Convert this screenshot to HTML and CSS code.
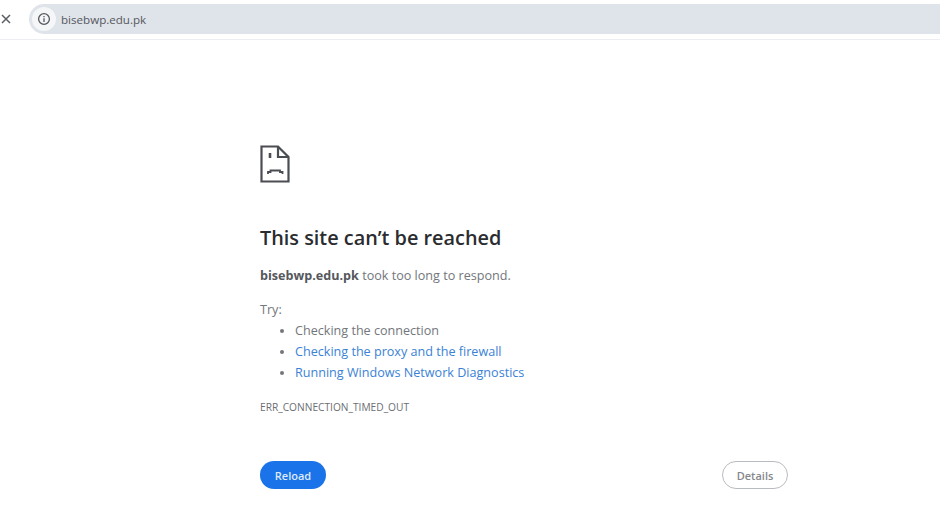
FILE: index.html
```html
<!DOCTYPE html>
<html>
<head>
<meta charset="UTF-8">
<title>bisebwp.edu.pk</title>
<link rel="stylesheet" href="styles.css">
</head>
<body>
<div class="toolbar">
  <svg class="close" width="12" height="12" viewBox="0 0 12 12"><path d="M2 2 L10 10 M10 2 L2 10" stroke="#5a5d62" stroke-width="1.5" fill="none"/></svg>
  <div class="address">
    <span class="info">
      <svg width="14" height="14" viewBox="0 0 14 14"><circle cx="7" cy="7" r="5.4" stroke="#55585d" stroke-width="1.3" fill="none"/><path d="M7 6.3 V10 M7 4 V5.3" stroke="#55585d" stroke-width="1.3" fill="none"/></svg>
    </span>
    <span class="url">bisebwp.edu.pk</span>
  </div>
</div>
<div class="main">
  <svg class="sad" width="30" height="38" viewBox="0 0 30 38">
    <path d="M1.5 1.5 H18 L28.5 12 V36.5 H1.5 Z" stroke="#4a4d51" stroke-width="2.2" fill="none"/>
    <path d="M18 1.5 V12 H28.5" stroke="#4a4d51" stroke-width="2.2" fill="none"/>
    <path d="M10 8 V13" stroke="#4a4d51" stroke-width="2.6" fill="none"/>
    <path d="M8 29 V27 H10.5 V25.5 H20 V27 H22.5 V29" stroke="#4a4d51" stroke-width="1.8" fill="none"/>
  </svg>
  <h1>This site can’t be reached</h1>
  <p class="summary"><b>bisebwp.edu.pk</b> took too long to respond.</p>
  <p class="try">Try:</p>
  <ul>
    <li>Checking the connection</li>
    <li><a href="#">Checking the proxy and the firewall</a></li>
    <li><a href="#">Running Windows Network Diagnostics</a></li>
  </ul>
  <div class="code">ERR_CONNECTION_TIMED_OUT</div>
  <div class="buttons">
    <button class="reload">Reload</button>
    <button class="details">Details</button>
  </div>
</div>
</body>
</html>
```

FILE: styles.css
```css
body {
  margin: 0;
  background: #fff;
  font-family: "Open Sans", "Noto Sans", sans-serif;
  color: #73767b;
  overflow: hidden;
}
.toolbar {
  height: 39px;
  border-bottom: 1px solid #eceef1;
  display: flex;
  align-items: flex-start;
}
.close {
  margin: 13px 0 0 0;
  flex: none;
}
.address {
  margin: 4px 0 0 17px;
  flex: 1;
  height: 30px;
  background: #dfe3ea;
  border-radius: 15px 0 0 15px;
  display: flex;
  align-items: center;
  padding-left: 3px;
}
.info {
  width: 24px;
  height: 24px;
  border-radius: 50%;
  background: #f4f6f8;
  display: flex;
  align-items: center;
  justify-content: center;
}
.url {
  margin-left: 5px;
  font-size: 11.6px;
  color: #55585d;
}
.main {
  width: 528px;
  margin-left: 260px;
  padding-top: 105px;
}
.sad {
  display: block;
}
h1 {
  margin: 40px 0 0;
  font-size: 19.85px;
  line-height: 30px;
  font-weight: 600;
  color: #2b2c2f;
}
.summary {
  margin: 14px 0 0;
  font-size: 12.6px;
  line-height: 18px;
}
.summary b {
  font-weight: 700;
  color: #55585d;
}
.try {
  margin: 16px 0 0;
  font-size: 12.6px;
  line-height: 18px;
}
ul {
  margin: 1px 0 0;
  padding-left: 35px;
}
li {
  font-size: 12.6px;
  line-height: 21px;
}
a {
  color: #3a82d6;
  text-decoration: none;
}
.code {
  margin-top: 17px;
  font-size: 10.2px;
  line-height: 14px;
  color: #6b6e73;
}
.buttons {
  margin-top: 47px;
  display: flex;
  justify-content: space-between;
}
button {
  width: 66px;
  height: 28px;
  border-radius: 14px;
  font-family: inherit;
  font-size: 11px;
  font-weight: 600;
  padding: 0;
}
.reload {
  background: #1a73e8;
  border: none;
  color: #dfeafb;
}
.details {
  background: #fff;
  border: 1px solid #b8bbbf;
  color: #85888c;
}
```
